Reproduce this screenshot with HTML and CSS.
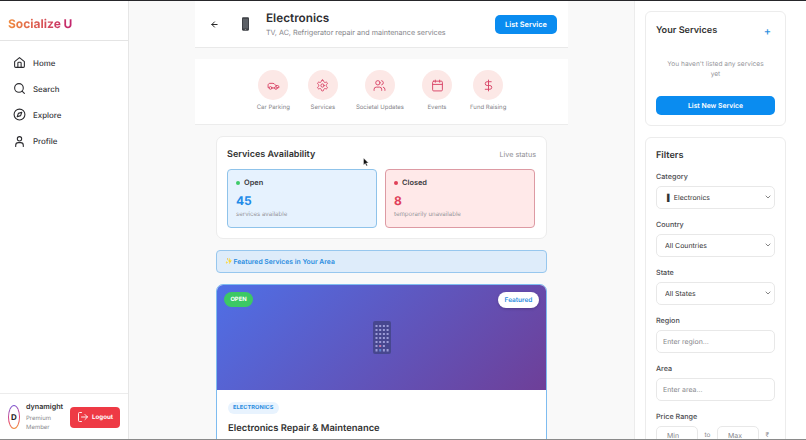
FILE: index.html
```html
<!DOCTYPE html>
<html lang="en">
<head>
<meta charset="utf-8">
<title>Socialize U - Electronics</title>
<link rel="stylesheet" href="styles.css">
</head>
<body>
<div class="app">
  <aside class="sidebar">
    <div class="logo-bar"><span class="logo">Socialize U</span></div>
    <nav class="nav">
      <a class="nav-item"><svg class="nav-icon" viewBox="0 0 24 24"><path d="M3 10.500 12 3l9 7.500V19a2 2 0 0 1-2 2H5a2 2 0 0 1-2-2z"/><path d="M9 21v-8a1.500 1.500 0 0 1 1.500-1.500h3A1.500 1.500 0 0 1 15 13v8"/></svg>Home</a>
      <a class="nav-item"><svg class="nav-icon" viewBox="0 0 24 24"><circle cx="11" cy="11" r="8"/><path d="m21 21-4.300-4.300"/></svg>Search</a>
      <a class="nav-item"><svg class="nav-icon" viewBox="0 0 24 24"><circle cx="12" cy="12" r="10"/><path d="m16.200 7.800-2.100 6.300-6.300 2.100 2.100-6.300z"/></svg>Explore</a>
      <a class="nav-item"><svg class="nav-icon" viewBox="0 0 24 24"><circle cx="12" cy="7" r="4"/><path d="M5 21v-2a5 5 0 0 1 5-5h4a5 5 0 0 1 5 5v2"/></svg>Profile</a>
    </nav>
    <div class="user-bar">
      <div class="avatar"><span class="avatar-inner">D</span></div>
      <div class="user-info">
        <div class="user-name">dynamight</div>
        <div class="user-role">Premium Member</div>
      </div>
      <button class="logout"><svg class="logout-icon" viewBox="0 0 24 24"><path d="M9 21H5a2 2 0 0 1-2-2V5a2 2 0 0 1 2-2h4"/><path d="m16 17 5-5-5-5"/><path d="M21 12H9"/></svg>Logout</button>
    </div>
  </aside>

  <main class="center">
    <div class="column">
      <header class="page-head">
        <svg class="back" viewBox="0 0 24 24"><path d="M19 12H5"/><path d="m12 19-7-7 7-7"/></svg>
        <svg class="head-phone" viewBox="0 0 12 20"><rect x="1" y="0.500" width="10" height="19" rx="1.600" fill="#3a3d42"/><rect x="2.200" y="2.500" width="7.600" height="14" fill="#5c6066"/><rect x="5" y="17.400" width="2" height="1" fill="#aaa"/></svg>
        <div class="head-text">
          <h1 class="head-title">Electronics</h1>
          <p class="head-sub">TV, AC, Refrigerator repair and maintenance services</p>
        </div>
        <button class="primary head-btn">List Service</button>
      </header>

      <section class="quick">
        <div class="quick-item"><span class="quick-circle"><svg class="quick-icon" viewBox="0 0 24 24"><path d="M3 16H2v-4.500C2 9.500 3.500 8 5.500 8H11c1.500 0 3 1 4 2.500l1 1.500h3.500c1.400 0 2.500 1 2.500 2.500V16h-2"/><circle cx="6.500" cy="16.500" r="2.500"/><circle cx="16.500" cy="16.500" r="2.500"/><path d="M9 16.500h5"/></svg></span><span class="quick-label">Car Parking</span></div>
        <div class="quick-item"><span class="quick-circle"><svg class="quick-icon" viewBox="0 0 24 24"><path d="M12.200 2h-.4a2 2 0 0 0-2 2v.2a2 2 0 0 1-1 1.700l-.4.300a2 2 0 0 1-2 0l-.2-.1a2 2 0 0 0-2.700.7l-.2.400a2 2 0 0 0 .7 2.700l.2.100a2 2 0 0 1 1 1.700v.5a2 2 0 0 1-1 1.800l-.2.100a2 2 0 0 0-.7 2.700l.2.400a2 2 0 0 0 2.700.7l.2-.1a2 2 0 0 1 2 0l.4.300a2 2 0 0 1 1 1.700v.2a2 2 0 0 0 2 2h.4a2 2 0 0 0 2-2v-.2a2 2 0 0 1 1-1.700l.4-.3a2 2 0 0 1 2 0l.2.100a2 2 0 0 0 2.700-.7l.2-.4a2 2 0 0 0-.7-2.700l-.2-.1a2 2 0 0 1-1-1.800v-.5a2 2 0 0 1 1-1.700l.2-.1a2 2 0 0 0 .7-2.700l-.2-.4a2 2 0 0 0-2.700-.7l-.2.100a2 2 0 0 1-2 0l-.4-.3a2 2 0 0 1-1-1.700V4a2 2 0 0 0-2-2z"/><circle cx="12" cy="12" r="3"/></svg></span><span class="quick-label">Services</span></div>
        <div class="quick-item"><span class="quick-circle"><svg class="quick-icon" viewBox="0 0 24 24"><path d="M16 21v-2a4 4 0 0 0-4-4H6a4 4 0 0 0-4 4v2"/><circle cx="9" cy="7" r="4"/><path d="M22 21v-2a4 4 0 0 0-3-3.900"/><path d="M16 3.100a4 4 0 0 1 0 7.800"/></svg></span><span class="quick-label">Societal Updates</span></div>
        <div class="quick-item"><span class="quick-circle"><svg class="quick-icon" viewBox="0 0 24 24"><path d="M8 2v4"/><path d="M16 2v4"/><rect x="3" y="4" width="18" height="18" rx="2"/><path d="M3 10h18"/></svg></span><span class="quick-label">Events</span></div>
        <div class="quick-item"><span class="quick-circle"><svg class="quick-icon" viewBox="0 0 24 24"><path d="M12 2v20"/><path d="M17 5H9.500a3.500 3.500 0 0 0 0 7h5a3.500 3.500 0 0 1 0 7H6"/></svg></span><span class="quick-label">Fund Raising</span></div>
      </section>

      <div class="stack">
        <section class="avail">
          <div class="avail-head">
            <h2 class="avail-title">Services Availability</h2>
            <span class="avail-live">Live status</span>
          </div>
          <div class="avail-grid">
            <div class="stat stat-open">
              <div class="stat-label"><i class="dot dot-green"></i>Open</div>
              <div class="stat-num num-blue">45</div>
              <div class="stat-sub">services available</div>
            </div>
            <div class="stat stat-closed">
              <div class="stat-label"><i class="dot dot-red"></i>Closed</div>
              <div class="stat-num num-red">8</div>
              <div class="stat-sub">temporarily unavailable</div>
            </div>
          </div>
        </section>

        <div class="banner"><span class="spark">✨</span>Featured Services in Your Area</div>

        <article class="svc">
          <div class="svc-hero">
            <span class="badge-open">OPEN</span>
            <span class="badge-feat">Featured</span>
            <svg class="hero-phone" viewBox="0 0 18 33">
              <rect width="18" height="33" rx="2" fill="#47478f"/>
              <g fill="#9c9cd8">
                <rect x="2.500" y="4" width="2" height="2"/><rect x="6.200" y="4" width="2" height="2"/><rect x="9.900" y="4" width="2" height="2"/><rect x="13.600" y="4" width="2" height="2"/>
                <rect x="2.500" y="8" width="2" height="2"/><rect x="6.200" y="8" width="2" height="2"/><rect x="9.900" y="8" width="2" height="2"/><rect x="13.600" y="8" width="2" height="2"/>
                <rect x="2.500" y="12" width="2" height="2"/><rect x="6.200" y="12" width="2" height="2"/><rect x="9.900" y="12" width="2" height="2"/><rect x="13.600" y="12" width="2" height="2"/>
                <rect x="2.500" y="16" width="2" height="2"/><rect x="6.200" y="16" width="2" height="2"/><rect x="9.900" y="16" width="2" height="2"/><rect x="13.600" y="16" width="2" height="2"/>
                <rect x="2.500" y="20" width="2" height="2"/><rect x="6.200" y="20" width="2" height="2"/><rect x="9.900" y="20" width="2" height="2"/><rect x="13.600" y="20" width="2" height="2"/>
                <rect x="2.500" y="24" width="2" height="2"/><rect x="6.200" y="24" width="2" height="2" fill="#c878a8"/><rect x="9.900" y="24" width="2" height="2"/>
                <rect x="2.500" y="28" width="2" height="2.500"/><rect x="6.200" y="28" width="2" height="2.500" fill="#5f86d0"/><rect x="9.900" y="28" width="2" height="2.500"/><rect x="13.600" y="28" width="2" height="2.500"/>
              </g>
            </svg>
          </div>
          <div class="svc-body">
            <span class="svc-tag">ELECTRONICS</span>
            <h3 class="svc-title">Electronics Repair &amp; Maintenance</h3>
          </div>
        </article>
      </div>
    </div>
  </main>

  <aside class="right">
    <section class="panel panel-services">
      <div class="panel-head"><h2 class="panel-title">Your Services</h2><span class="plus">+</span></div>
      <p class="empty">You haven't listed any services yet</p>
      <button class="primary wide-btn">List New Service</button>
    </section>
    <section class="panel panel-filters">
      <h2 class="panel-title filters-title">Filters</h2>
      <label class="field"><span class="field-label">Category</span>
        <select class="control"><option>&nbsp;▌ Electronics</option></select></label>
      <label class="field"><span class="field-label">Country</span>
        <select class="control"><option>All Countries</option></select></label>
      <label class="field"><span class="field-label">State</span>
        <select class="control"><option>All States</option></select></label>
      <label class="field"><span class="field-label">Region</span>
        <input class="control text-input" placeholder="Enter region..."></label>
      <label class="field"><span class="field-label">Area</span>
        <input class="control text-input" placeholder="Enter area..."></label>
      <div class="field"><span class="field-label">Price Range</span>
        <div class="price-row">
          <input class="control price-input" placeholder="Min">
          <span class="price-sep">to</span>
          <input class="control price-input" placeholder="Max">
          <span class="price-sep">₹</span>
        </div>
      </div>
    </section>
  </aside>
</div>
<svg class="cursor" viewBox="0 0 12 18"><path d="M1 1v14l3.500-3.200 2.300 5 2.200-1-2.300-4.800H11z" fill="#111" stroke="#fff" stroke-width="0.800"/></svg>
<div class="bottom-edge"></div>
</body>
</html>
```

FILE: styles.css
```css
* { box-sizing: border-box; }
html, body { margin: 0; height: 100%; overflow: hidden; }
body {
  position: relative;
  font-family: Inter, "Liberation Sans", sans-serif;
  color: #2f2f33;
  background: #f9f9f9;
  border-top: 1px solid #26262a;
  text-rendering: geometricPrecision;
}
h1, h2, h3, p { margin: 0; }
button, input, select { text-rendering: geometricPrecision; }
button { font-family: inherit; border: 0; cursor: pointer; }

.app { display: flex; height: 439px; overflow: hidden; }

/* Left sidebar */
.sidebar {
  width: 129px;
  flex: none;
  display: flex;
  flex-direction: column;
  background: #fff;
  border-right: 1px solid #e6e6e6;
}
.logo-bar { height: 40px; padding: 11px 8px 0; border-bottom: 1px solid #e4e4e4; flex: none; }
.logo {
  font-size: 12px;
  font-weight: 700;
  line-height: 16px;
  display: inline-block;
  background: linear-gradient(90deg, #f08a3c, #c2246e);
  -webkit-background-clip: text;
  background-clip: text;
  color: transparent;
}
.nav { display: flex; flex-direction: column; gap: 8.200px; padding: 12.500px 13px 0; flex: 1; }
.nav-item { display: flex; align-items: center; gap: 7px; height: 18px; font-size: 7.900px; font-weight: 500; color: #3a3a3e; }
.nav-icon { width: 13px; height: 13px; fill: none; stroke: #2b2b2f; stroke-width: 2; stroke-linecap: round; stroke-linejoin: round; flex: none; }

.user-bar {
  height: 47px;
  flex: none;
  display: flex;
  align-items: center;
  padding: 0 8px;
  border-top: 1px solid #ececec;
}
.avatar {
  width: 12px;
  height: 24px;
  border-radius: 50%;
  padding: 1px;
  flex: none;
  background: linear-gradient(160deg, #6a5ae0, #e0407a 55%, #f5a030);
}
.avatar-inner {
  display: flex;
  align-items: center;
  justify-content: center;
  width: 100%;
  height: 100%;
  border-radius: 50%;
  background: #fff;
  font-size: 8px;
  font-weight: 700;
  color: #222;
}
.user-info { margin-left: 6px; width: 44px; flex: none; }
.user-name { font-size: 7.200px; font-weight: 600; line-height: 10px; white-space: nowrap; color: #333; }
.user-role { font-size: 6px; line-height: 9.500px; color: #8a8a8e; margin-top: 2px; width: 36px; }
.logout {
  width: 50px;
  height: 21px;
  flex: none;
  display: flex;
  align-items: center;
  justify-content: center;
  gap: 3px;
  background: #ee3a45;
  color: #fff;
  border-radius: 4px;
  font-size: 6.200px;
  font-weight: 700;
}
.logout-icon { width: 12px; height: 12px; fill: none; stroke: #fff; stroke-width: 1.800; stroke-linecap: round; stroke-linejoin: round; }

/* Center column */
.center { flex: 1; min-width: 0; padding-left: 66px; }
.column { width: 373px; }
.page-head {
  height: 47px;
  display: flex;
  align-items: center;
  background: #fff;
  border-bottom: 1px solid #e9e9e9;
  padding: 0 11px 0 15px;
}
.back { width: 9px; height: 9px; fill: none; stroke: #222; stroke-width: 2.600; stroke-linecap: round; stroke-linejoin: round; flex: none; }
.head-phone { width: 9px; height: 14px; margin-left: 22px; flex: none; }
.head-text { margin-left: 16px; flex: 1; }
.head-title { font-size: 11.760px; font-weight: 600; line-height: 16px; color: #2d2d31; }
.head-sub { font-size: 7.160px; line-height: 11px; color: #85858a; margin-top: 1px; white-space: nowrap; }
.primary { background: #0a8cf0; color: #fff; font-weight: 600; border-radius: 5px; }
.head-btn { width: 62px; height: 19px; font-size: 7.400px; padding: 0; }

.quick {
  height: 66px;
  margin-top: 11px;
  background: #fff;
  border-bottom: 1px solid #ececec;
  display: flex;
  justify-content: center;
  gap: 18px;
  padding: 11px 0 0;
}
.quick-item { display: flex; flex-direction: column; align-items: center; gap: 3px; }
.quick-circle { width: 30px; height: 30px; border-radius: 50%; background: #fce8e6; display: flex; align-items: center; justify-content: center; }
.quick-icon { width: 13px; height: 13px; fill: none; stroke: #d9486a; stroke-width: 1.800; stroke-linecap: round; stroke-linejoin: round; }
.quick-label { font-size: 6px; line-height: 10px; color: #85858a; white-space: nowrap; }

.stack { padding: 11px 21px 0; display: flex; flex-direction: column; gap: 11px; }
.avail {
  height: 103px;
  background: #fff;
  border: 1px solid #ececec;
  border-radius: 7px;
  padding: 10px 10px 0;
}
.avail-head { display: flex; justify-content: space-between; align-items: center; height: 14px; }
.avail-title { font-size: 9.050px; font-weight: 600; color: #333; }
.avail-live { font-size: 7.200px; color: #8d8d92; }
.avail-grid { display: grid; grid-template-columns: 150px 150px; gap: 8px; margin-top: 8px; }
.stat { height: 59px; border-radius: 4px; padding: 8px 8px 0; }
.stat-open { background: #e6f2fe; border: 1px solid #8fc3ea; }
.stat-closed { background: #ffe9e9; border: 1px solid #dd9aa3; }
.stat-label { display: flex; align-items: center; font-size: 7.400px; font-weight: 600; line-height: 10px; color: #3a3a3e; }
.dot { width: 4px; height: 4px; border-radius: 50%; margin-right: 4px; }
.dot-green { background: #3ecb68; }
.dot-red { background: #e04058; }
.stat-num { font-size: 12px; font-weight: 700; line-height: 18px; margin-top: 4px; }
.num-blue { color: #1f8be8; }
.num-red { color: #e0405a; }
.stat-sub { font-size: 6.100px; line-height: 10px; color: #96969b; white-space: nowrap; }

.banner {
  height: 23px;
  flex: none;
  background: #deecfa;
  border: 1px solid #97c7ee;
  border-radius: 4px;
  display: flex;
  align-items: center;
  padding-left: 8px;
  font-size: 6.800px;
  font-weight: 600;
  color: #2a8ce0;
}
.spark { color: #f2cf70; margin-right: 1px; font-size: 6px; }

.svc {
  background: #fff;
  border: 1px solid #7ebcf0;
  border-radius: 7px;
  overflow: hidden;
  flex: none;
  height: 170px;
}
.svc-hero {
  position: relative;
  height: 105px;
  display: flex;
  align-items: center;
  justify-content: center;
  background: linear-gradient(135deg, #4f6fe6, #6e3f98);
}
.hero-phone { width: 18px; height: 33px; }
.badge-open {
  position: absolute;
  left: 7px;
  top: 7px;
  width: 29px;
  height: 15px;
  border-radius: 8px;
  background: #3cc864;
  color: #fff;
  font-size: 5.800px;
  font-weight: 700;
  display: flex;
  align-items: center;
  justify-content: center;
}
.badge-feat {
  position: absolute;
  right: 7px;
  top: 7px;
  width: 41px;
  height: 16px;
  border-radius: 8px;
  background: #fff;
  color: #2a8ce0;
  font-size: 6.500px;
  font-weight: 600;
  display: flex;
  align-items: center;
  justify-content: center;
  box-shadow: 0 1px 3px rgba(0, 0, 0, 0.2);
}
.svc-body { padding: 12px 11px 0; display: flex; flex-direction: column; align-items: flex-start; }
.svc-tag {
  height: 12px;
  line-height: 12px;
  padding: 0 5px;
  border-radius: 7px;
  background: #e8f3fe;
  color: #2a8ce0;
  font-size: 5.600px;
  font-weight: 700;
  letter-spacing: 0.100px;
}
.svc-title { font-size: 9.400px; font-weight: 600; line-height: 13px; color: #333; margin-top: 8px; white-space: nowrap; }

/* Right panel */
.right {
  width: 172px;
  flex: none;
  background: #fff;
  border-left: 1px solid #ececec;
  padding: 10px 20px 0 10px;
  display: flex;
  flex-direction: column;
  gap: 11px;
}
.panel { background: #fff; border: 1px solid #ececec; border-radius: 6px; padding: 11px 10px 10px; flex: none; }
.panel-services { height: 115px; }
.panel-head { display: flex; justify-content: space-between; align-items: center; height: 15px; }
.panel-title { font-size: 9.150px; font-weight: 600; color: #333; }
.plus { font-size: 11px; font-weight: 500; color: #2f8fe0; padding-right: 4px; }
.empty { font-size: 6.600px; line-height: 10px; text-align: center; color: #97979c; margin: 21px 10px 0; }
.wide-btn { display: block; width: 100%; height: 19px; margin-top: 17px; font-size: 6.800px; padding: 0; }
.filters-title { line-height: 14px; margin-bottom: 9px; }
.field { display: block; margin-bottom: 11.600px; }
.field-label { display: block; font-size: 7.200px; font-weight: 500; line-height: 10px; color: #4a4a4e; margin-bottom: 3.500px; }
.control {
  display: block;
  width: 100%;
  height: 23px;
  background: #fff;
  border: 1px solid #e8e8e8;
  border-radius: 5px;
  font-family: inherit;
  font-size: 6.950px;
  color: #333;
  padding: 0 8px;
  outline: none;
}
select.control {
  appearance: none;
  background: #fff url("data:image/svg+xml,%3Csvg xmlns='http://www.w3.org/2000/svg' width='6' height='4' viewBox='0 0 6 4'%3E%3Cpath d='M.7.7 3 3l2.300-2.300' fill='none' stroke='%23666' stroke-width='.8'/%3E%3C/svg%3E") no-repeat right 3px center;
}
.text-input { padding: 0 6px; }
.text-input::placeholder, .price-input::placeholder { color: #85858a; opacity: 1; }
.price-row { display: flex; align-items: flex-start; gap: 6.500px; }
.price-input { width: 42px; height: 19px; flex: none; padding: 0 10px; }
.price-sep { font-size: 6.500px; line-height: 9px; margin-top: 5px; color: #8d8d92; }

/* Overlays: pointer and the bottom edge of the capture */
.cursor { position: absolute; left: 363px; top: 156px; width: 6px; height: 10px; }
.bottom-edge { position: absolute; left: 0; right: 0; bottom: 0; height: 1px; background: #8a8a8a; }
```
